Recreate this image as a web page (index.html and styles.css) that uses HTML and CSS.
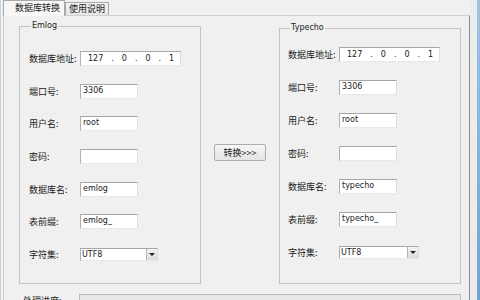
FILE: index.html
```html
<!DOCTYPE html>
<html>
<head>
<meta charset="utf-8">
<link rel="stylesheet" href="styles.css">
</head>
<body>
<div class="screen">
  <div class="edge"></div>
  <div class="win">
    <div class="tabs">
      <div class="tab tab-active">数据库转换</div>
      <div class="tab">使用说明</div>
    </div>
    <div class="panel">
      <div class="groups">
        <fieldset class="group group-left">
          <legend class="legend">Emlog</legend>
          <div class="rows">
            <div class="row"><span class="label">数据库地址:</span><div class="ip"><span>127</span><span>.</span><span>0</span><span>.</span><span>0</span><span>.</span><span>1</span></div></div>
            <div class="row"><span class="label">端口号:</span><div class="input">3306</div></div>
            <div class="row"><span class="label">用户名:</span><div class="input">root</div></div>
            <div class="row"><span class="label">密码:</span><div class="input"></div></div>
            <div class="row"><span class="label">数据库名:</span><div class="input">emlog</div></div>
            <div class="row"><span class="label">表前缀:</span><div class="input">emlog_</div></div>
            <div class="row"><span class="label">字符集:</span><div class="select"><span class="select-text">UTF8</span><span class="select-btn"><span class="arrow"></span></span></div></div>
          </div>
        </fieldset>
        <div class="mid"><div class="button">转换&gt;&gt;&gt;</div></div>
        <fieldset class="group group-right">
          <legend class="legend">Typecho</legend>
          <div class="rows">
            <div class="row"><span class="label">数据库地址:</span><div class="ip"><span>127</span><span>.</span><span>0</span><span>.</span><span>0</span><span>.</span><span>1</span></div></div>
            <div class="row"><span class="label">端口号:</span><div class="input">3306</div></div>
            <div class="row"><span class="label">用户名:</span><div class="input">root</div></div>
            <div class="row"><span class="label">密码:</span><div class="input"></div></div>
            <div class="row"><span class="label">数据库名:</span><div class="input">typecho</div></div>
            <div class="row"><span class="label">表前缀:</span><div class="input">typecho_</div></div>
            <div class="row"><span class="label">字符集:</span><div class="select select-wide"><span class="select-text">UTF8</span><span class="select-btn"><span class="arrow"></span></span></div></div>
          </div>
        </fieldset>
      </div>
      <div class="progress-row">
        <span class="progress-label">处理进度:</span>
        <div class="progress"></div>
      </div>
    </div>
  </div>
  <div class="side"><div class="side-blue"></div></div>
</div>
</body>
</html>
```
FILE: styles.css
```css
html, body {
  margin: 0;
  padding: 0;
  background: #f0f0f0;
}
.screen {
  width: 480px;
  height: 300px;
  overflow: hidden;
  display: flex;
  font-family: "Noto Sans CJK SC", "Liberation Sans", sans-serif;
  font-size: 9px;
  color: #1a1a1a;
}
.edge {
  width: 1px;
  background: #c6d3df;
  flex: none;
}
.win {
  width: 469px;
  flex: none;
  padding-left: 2px;
  box-sizing: border-box;
}
.tabs {
  display: flex;
  align-items: flex-end;
  height: 15px;
  position: relative;
  z-index: 1;
}
.tab {
  height: 12px;
  line-height: 12px;
  padding: 0 3px;
  border: 1px solid #a9a9a9;
  border-bottom: none;
  background: linear-gradient(#f4f4f4, #e6e6e6);
  white-space: nowrap;
}
.tab-active {
  height: 15px;
  line-height: 14px;
  padding: 0 4px 0 11px;
  background: #f7f7f7;
  margin-bottom: -1px;
}
.panel {
  border: 1px solid #d0d0d0;
  border-right: 1px solid #8e8e8e;
  border-bottom: none;
  height: 290px;
  box-sizing: border-box;
  padding: 5px 8px 0 15px;
}
.groups {
  display: flex;
}
.group {
  margin: 0;
  padding: 0 0 0 9px;
  border: 1px solid #c3c3c3;
  width: 182px;
  height: 263px;
  box-sizing: border-box;
  font-family: "Liberation Sans", sans-serif;
}
.group-right {
  margin-top: 2px;
  height: 261px;
  padding-left: 8px;
}
.legend {
  font-family: "DejaVu Sans", sans-serif;
  font-size: 8px;
  line-height: 10px;
  padding: 0 1px;
  margin-left: 2px;
  color: #222;
}
.rows {
  display: flex;
  flex-direction: column;
  padding-top: 11px;
}
.group-right .rows {
  padding-top: 5px;
}
.row {
  display: flex;
  align-items: center;
  height: 32.7px;
}
.group-right .row {
  height: 33px;
}
.label {
  width: 51px;
  flex: none;
  font-family: "Noto Sans CJK SC", sans-serif;
  font-size: 9px;
}
.input {
  width: 58px;
  height: 15px;
  box-sizing: border-box;
  background: #fff;
  border: 1px solid;
  border-color: #a6a6a6 #dedede #e8e8e8 #b0b0b0;
  font-family: "DejaVu Sans", sans-serif;
  font-size: 8px;
  line-height: 12px;
  padding-left: 2px;
}
.ip {
  width: 101px;
  height: 15px;
  box-sizing: border-box;
  background: #fff;
  border: 1px solid;
  border-color: #a6a6a6 #dedede #e8e8e8 #b0b0b0;
  font-family: "DejaVu Sans", sans-serif;
  font-size: 8px;
  line-height: 13px;
  display: flex;
  padding-left: 7px;
  gap: 8px;
}
.select {
  width: 78px;
  height: 13px;
  box-sizing: border-box;
  background: #fff;
  border: 1px solid;
  border-color: #a6a6a6 #dedede #e8e8e8 #b0b0b0;
  display: flex;
  font-family: "DejaVu Sans", sans-serif;
  font-size: 8px;
  line-height: 11px;
}
.select-wide {
  width: 80px;
}
.select-text {
  flex: 1;
  padding-left: 1px;
}
.select-btn {
  width: 10px;
  flex: none;
  background: linear-gradient(#f4f4f4, #dcdcdc);
  border-left: 1px solid #b5b5b5;
  display: flex;
  align-items: center;
  justify-content: center;
}
.arrow {
  width: 0;
  height: 0;
  border-left: 3px solid transparent;
  border-right: 3px solid transparent;
  border-top: 3px solid #222;
}
.mid {
  width: 78px;
  flex: none;
  display: flex;
  justify-content: center;
  padding-top: 123px;
  box-sizing: border-box;
}
.button {
  width: 52px;
  height: 17px;
  box-sizing: border-box;
  border: 1px solid #adadad;
  border-radius: 2px;
  background: linear-gradient(#f6f6f6, #e4e4e4);
  text-align: center;
  line-height: 15px;
  font-size: 9px;
  align-self: flex-start;
}
.progress-row {
  display: flex;
  margin-top: 10px;
  margin-left: 4px;
  align-items: flex-start;
}
.progress-label {
  width: 56px;
  line-height: 14px;
  padding-top: 0;
}
.progress {
  width: 382px;
  height: 20px;
  box-sizing: border-box;
  border: 1px solid #bcbcbc;
  background: #e8e8e8;
}
.side {
  flex: 1;
  display: flex;
  justify-content: flex-end;
  background: #ececec;
}
.side-blue {
  width: 3px;
  background: linear-gradient(#9cc3e3, #6fa3d1);
}
```
